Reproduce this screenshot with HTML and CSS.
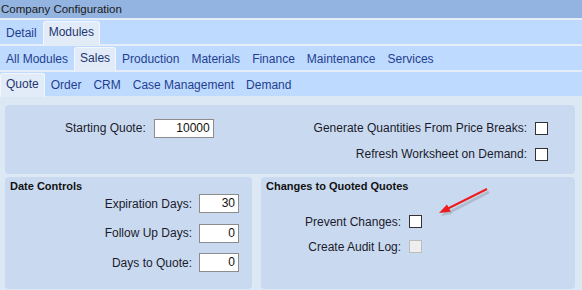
FILE: index.html
```html
<!DOCTYPE html>
<html lang="en">
<head>
    <meta charset="UTF-8">
    <title>Company Configuration</title>
    <link rel="stylesheet" href="styles.css">
</head>
<body>
    <div class="window">
        <div class="titlebar">Company Configuration</div>

        <div class="tabrow">
            <div class="tab">Detail</div>
            <div class="tab selected">Modules</div>
        </div>
        <div class="tabrow">
            <div class="tab">All Modules</div>
            <div class="tab selected">Sales</div>
            <div class="tab">Production</div>
            <div class="tab">Materials</div>
            <div class="tab">Finance</div>
            <div class="tab">Maintenance</div>
            <div class="tab">Services</div>
        </div>
        <div class="tabrow">
            <div class="tab selected">Quote</div>
            <div class="tab">Order</div>
            <div class="tab">CRM</div>
            <div class="tab">Case Management</div>
            <div class="tab">Demand</div>
        </div>

        <div class="content">
            <div class="panel top-panel">
                <div class="field-row start-quote">
                    <label>Starting Quote:</label>
                    <div class="textbox wide">10000</div>
                </div>
                <div class="check-grid">
                    <label>Generate Quantities From Price Breaks:</label>
                    <div class="checkbox"></div>
                    <label>Refresh Worksheet on Demand:</label>
                    <div class="checkbox"></div>
                </div>
            </div>

            <div class="bottom">
                <div class="panel date-panel">
                    <div class="panel-title">Date Controls</div>
                    <div class="date-grid">
                        <label>Expiration Days:</label>
                        <div class="textbox">30</div>
                        <label>Follow Up Days:</label>
                        <div class="textbox">0</div>
                        <label>Days to Quote:</label>
                        <div class="textbox">0</div>
                    </div>
                </div>

                <div class="panel changes-panel">
                    <div class="panel-title">Changes to Quoted Quotes</div>
                    <div class="change-grid">
                        <label>Prevent Changes:</label>
                        <div class="checkbox"></div>
                        <label>Create Audit Log:</label>
                        <div class="checkbox disabled"></div>
                    </div>

                    <!-- annotation arrow drawn over the panel -->
                    <svg class="arrow" width="62" height="40" viewBox="0 0 62 40">
                        <line x1="54" y1="7" x2="15" y2="27" stroke="#8e98a8" stroke-width="3" opacity="0.45"/>
                        <polygon points="6,31 17,29 14,22" fill="#8e98a8" opacity="0.45"/>
                        <line x1="52" y1="4" x2="12" y2="24" stroke="#ee1c1c" stroke-width="2"/>
                        <polygon points="4,28 15.6,26.7 12,19.5" fill="#ee1c1c"/>
                    </svg>
                </div>
            </div>
        </div>
    </div>
</body>
</html>
```

FILE: styles.css
```css
body {
    margin: 0;
    font-family: "Liberation Sans", Arial, sans-serif;
    background: #dde8f5;
}

.window {
    width: 582px;
    height: 290px;
    overflow: hidden;
    background: #e4edf8;
}

.titlebar {
    height: 18px;
    line-height: 18px;
    padding-left: 1px;
    font-size: 11.5px;
    color: #1a1a1a;
    background: #93b3e0;
}

.tabrow {
    display: flex;
    align-items: flex-end;
    height: 24px;
    margin-top: 2px;
    background: #bedaff;
}

.tab {
    height: 24px;
    line-height: 27px;
    padding: 0 6px;
    font-size: 12px;
    color: #1e3f8f;
    white-space: nowrap;
}

.tab.selected {
    height: 23px;
    line-height: 20px;
    margin-bottom: -1px;
    background: #e2ecf9;
    border: 1px solid #f3f7fc;
    border-bottom: none;
    border-radius: 3px 3px 0 0;
    color: #1e3570;
    padding: 0 5px;
}

.content {
    padding: 9px 7px 0 5px;
    background: #dde8f5;
    height: 200px;
}

.panel {
    background: #c9daf0;
    border-radius: 4px;
    font-size: 12px;
    color: #1c1a2c;
    position: relative;
}

.top-panel {
    display: flex;
    justify-content: space-between;
    padding: 10px 27px 7px 60px;
    height: 52px;
}

.field-row {
    display: flex;
    align-items: center;
    gap: 8px;
    height: 26px;
}

.check-grid,
.change-grid {
    display: grid;
    grid-template-columns: auto 13px;
    grid-auto-rows: 26px;
    column-gap: 8px;
    align-items: center;
    justify-items: end;
}

.textbox {
    width: 35px;
    height: 17px;
    line-height: 17px;
    padding: 0 3px 0 0;
    background: #ffffff;
    border: 1px solid #8c8c8c;
    text-align: right;
    color: #101010;
    font-size: 12px;
}

.textbox.wide {
    width: 55px;
}

.checkbox {
    width: 11px;
    height: 11px;
    background: #ffffff;
    border: 1px solid #333333;
}

.checkbox.disabled {
    background: #eeeeee;
    border-color: #bcbcbc;
}

.bottom {
    display: flex;
    gap: 9px;
    margin-top: 3px;
    height: 112px;
}

.panel-title {
    font-size: 11px;
    font-weight: bold;
    color: #111111;
    padding: 3px 0 0 5px;
    height: 12px;
}

.date-panel {
    width: 247px;
}

.date-grid {
    display: grid;
    grid-template-columns: auto 39px;
    grid-auto-rows: 29.5px;
    column-gap: 8px;
    align-items: center;
    justify-content: end;
    justify-items: end;
    margin-top: -3px;
    padding-right: 13px;
}

.changes-panel {
    flex: 1;
}

.change-grid {
    grid-auto-rows: 25px;
    justify-content: start;
    padding: 17px 0 0 44px;
}

.arrow {
    position: absolute;
    left: 174px;
    top: 8px;
}
```
